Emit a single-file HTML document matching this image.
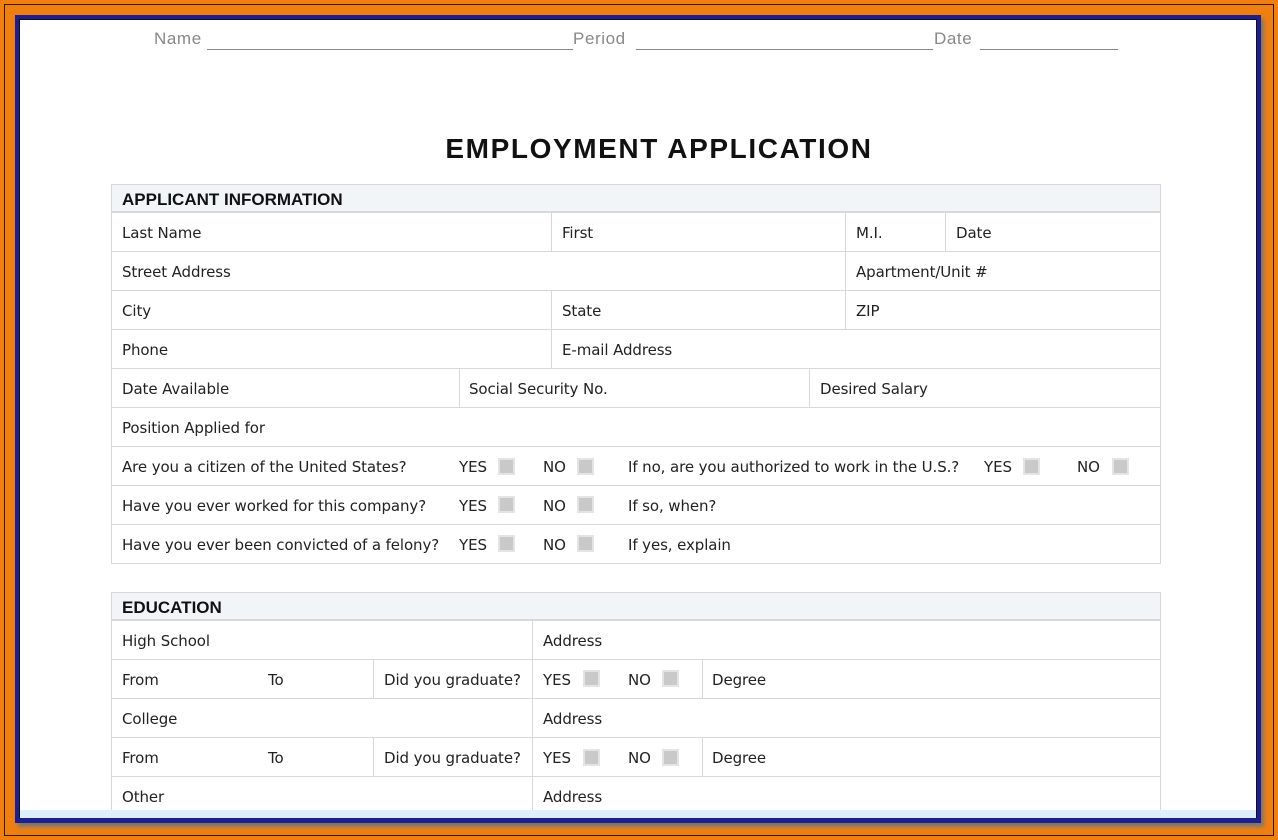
<!DOCTYPE html>
<html><head><meta charset="utf-8"><style>
body{margin:0;width:1278px;height:840px;overflow:hidden;background:#f07f12;position:relative;font-family:"DejaVu Sans","Liberation Sans",sans-serif;}
.a{position:absolute}
.t{position:absolute;font-size:15px;color:#222;white-space:nowrap;line-height:39px;letter-spacing:-0.1px;margin-top:2px}
.h{position:absolute;left:111px;width:1050px;height:1px;background:#d8d8d8}
.v{position:absolute;width:1px;background:#d8d8d8}
.cb{position:absolute;width:17px;height:17px;background:#c9c9c9;border:2px solid #e4e4e4;box-sizing:border-box}
.hd{position:absolute;left:111px;width:1050px;height:28px;background:#f1f5f8;font-weight:bold;font-size:17px;line-height:30px;box-sizing:border-box;padding-left:10px;color:#111;font-family:"Liberation Sans",sans-serif}
.g{position:absolute;top:29px;font-size:17px;color:#888;letter-spacing:0.6px;font-family:'Liberation Sans',sans-serif}
.u{position:absolute;top:49px;height:1px;background:#888}
</style></head><body>
<div class="a" style="left:4px;top:4px;right:4px;bottom:4px;border:1px solid #3a1a00"></div>
<div class="a" style="left:15px;top:15px;width:1246px;height:808px;background:#1e1e8c;box-shadow:3px 4px 4px #777"></div>
<div class="a" style="left:19px;top:19px;width:1238px;height:799px;background:#111"></div>
<div class="a" style="left:20px;top:20px;width:1236px;height:790px;background:#fff"></div>
<div class="a" style="left:20px;top:810px;width:1236px;height:8px;background:#dceef9"></div>

<div class="g" style="left:154px">Name</div><div class="u" style="left:207px;width:366px"></div>
<div class="g" style="left:573px">Period</div><div class="u" style="left:636px;width:297px"></div>
<div class="g" style="left:934px">Date</div><div class="u" style="left:980px;width:138px"></div>
<div class="a" style="left:0;width:1318px;text-align:center;top:133px;font-size:28px;font-weight:bold;color:#111;font-family:'Liberation Sans',sans-serif;letter-spacing:1.6px">EMPLOYMENT APPLICATION</div>

<div class="hd" style="top:184px;border:1px solid #d8d8d8">APPLICANT INFORMATION</div>
<div class="h" style="top:212px"></div><div class="h" style="top:251px"></div><div class="h" style="top:290px"></div><div class="h" style="top:329px"></div><div class="h" style="top:368px"></div><div class="h" style="top:407px"></div><div class="h" style="top:446px"></div><div class="h" style="top:485px"></div><div class="h" style="top:524px"></div><div class="h" style="top:563px"></div>
<div class="v" style="left:111px;top:184px;height:380px"></div><div class="v" style="left:1160px;top:184px;height:380px"></div>
<div class="v" style="left:551px;top:212px;height:39px"></div><div class="v" style="left:845px;top:212px;height:39px"></div><div class="v" style="left:945px;top:212px;height:39px"></div>
<div class="v" style="left:845px;top:251px;height:39px"></div>
<div class="v" style="left:551px;top:290px;height:39px"></div><div class="v" style="left:845px;top:290px;height:39px"></div>
<div class="v" style="left:551px;top:329px;height:39px"></div>
<div class="v" style="left:459px;top:368px;height:39px"></div><div class="v" style="left:809px;top:368px;height:39px"></div>

<div class="t" style="left:122px;top:212px">Last Name</div><div class="t" style="left:562px;top:212px">First</div><div class="t" style="left:856px;top:212px">M.I.</div><div class="t" style="left:956px;top:212px">Date</div>
<div class="t" style="left:122px;top:251px">Street Address</div><div class="t" style="left:856px;top:251px">Apartment/Unit #</div>
<div class="t" style="left:122px;top:290px">City</div><div class="t" style="left:562px;top:290px">State</div><div class="t" style="left:856px;top:290px">ZIP</div>
<div class="t" style="left:122px;top:329px">Phone</div><div class="t" style="left:562px;top:329px">E-mail Address</div>
<div class="t" style="left:122px;top:368px">Date Available</div><div class="t" style="left:469px;top:368px">Social Security No.</div><div class="t" style="left:820px;top:368px">Desired Salary</div>
<div class="t" style="left:122px;top:407px">Position Applied for</div>
<div class="t" style="left:122px;top:446px">Are you a citizen of the United States?</div><div class="t" style="left:459px;top:446px">YES</div><div class="cb" style="left:498px;top:458px"></div><div class="t" style="left:543px;top:446px">NO</div><div class="cb" style="left:577px;top:458px"></div><div class="t" style="left:628px;top:446px">If no, are you authorized to work in the U.S.?</div><div class="t" style="left:984px;top:446px">YES</div><div class="cb" style="left:1023px;top:458px"></div><div class="t" style="left:1077px;top:446px">NO</div><div class="cb" style="left:1112px;top:458px"></div>
<div class="t" style="left:122px;top:485px">Have you ever worked for this company?</div><div class="t" style="left:459px;top:485px">YES</div><div class="cb" style="left:498px;top:496px"></div><div class="t" style="left:543px;top:485px">NO</div><div class="cb" style="left:577px;top:496px"></div><div class="t" style="left:628px;top:485px">If so, when?</div>
<div class="t" style="left:122px;top:524px">Have you ever been convicted of a felony?</div><div class="t" style="left:459px;top:524px">YES</div><div class="cb" style="left:498px;top:535px"></div><div class="t" style="left:543px;top:524px">NO</div><div class="cb" style="left:577px;top:535px"></div><div class="t" style="left:628px;top:524px">If yes, explain</div>

<div class="hd" style="top:592px;border:1px solid #d8d8d8">EDUCATION</div>
<div class="h" style="top:620px"></div><div class="h" style="top:659px"></div><div class="h" style="top:698px"></div><div class="h" style="top:737px"></div><div class="h" style="top:776px"></div>
<div class="v" style="left:111px;top:592px;height:218px"></div><div class="v" style="left:1160px;top:592px;height:218px"></div>
<div class="v" style="left:532px;top:620px;height:39px"></div>
<div class="v" style="left:373px;top:659px;height:39px"></div><div class="v" style="left:532px;top:659px;height:39px"></div><div class="v" style="left:702px;top:659px;height:39px"></div>
<div class="v" style="left:532px;top:698px;height:39px"></div>
<div class="v" style="left:373px;top:737px;height:39px"></div><div class="v" style="left:532px;top:737px;height:39px"></div><div class="v" style="left:702px;top:737px;height:39px"></div>
<div class="v" style="left:532px;top:776px;height:34px"></div>
<div class="t" style="left:122px;top:620px">High School</div><div class="t" style="left:543px;top:620px">Address</div>
<div class="t" style="left:122px;top:659px">From</div><div class="t" style="left:268px;top:659px">To</div><div class="t" style="left:384px;top:659px">Did you graduate?</div><div class="t" style="left:543px;top:659px">YES</div><div class="cb" style="left:583px;top:670px"></div><div class="t" style="left:628px;top:659px">NO</div><div class="cb" style="left:662px;top:670px"></div><div class="t" style="left:712px;top:659px">Degree</div>
<div class="t" style="left:122px;top:698px">College</div><div class="t" style="left:543px;top:698px">Address</div>
<div class="t" style="left:122px;top:737px">From</div><div class="t" style="left:268px;top:737px">To</div><div class="t" style="left:384px;top:737px">Did you graduate?</div><div class="t" style="left:543px;top:737px">YES</div><div class="cb" style="left:583px;top:749px"></div><div class="t" style="left:628px;top:737px">NO</div><div class="cb" style="left:662px;top:749px"></div><div class="t" style="left:712px;top:737px">Degree</div>
<div class="t" style="left:122px;top:776px">Other</div><div class="t" style="left:543px;top:776px">Address</div>
</body></html>
